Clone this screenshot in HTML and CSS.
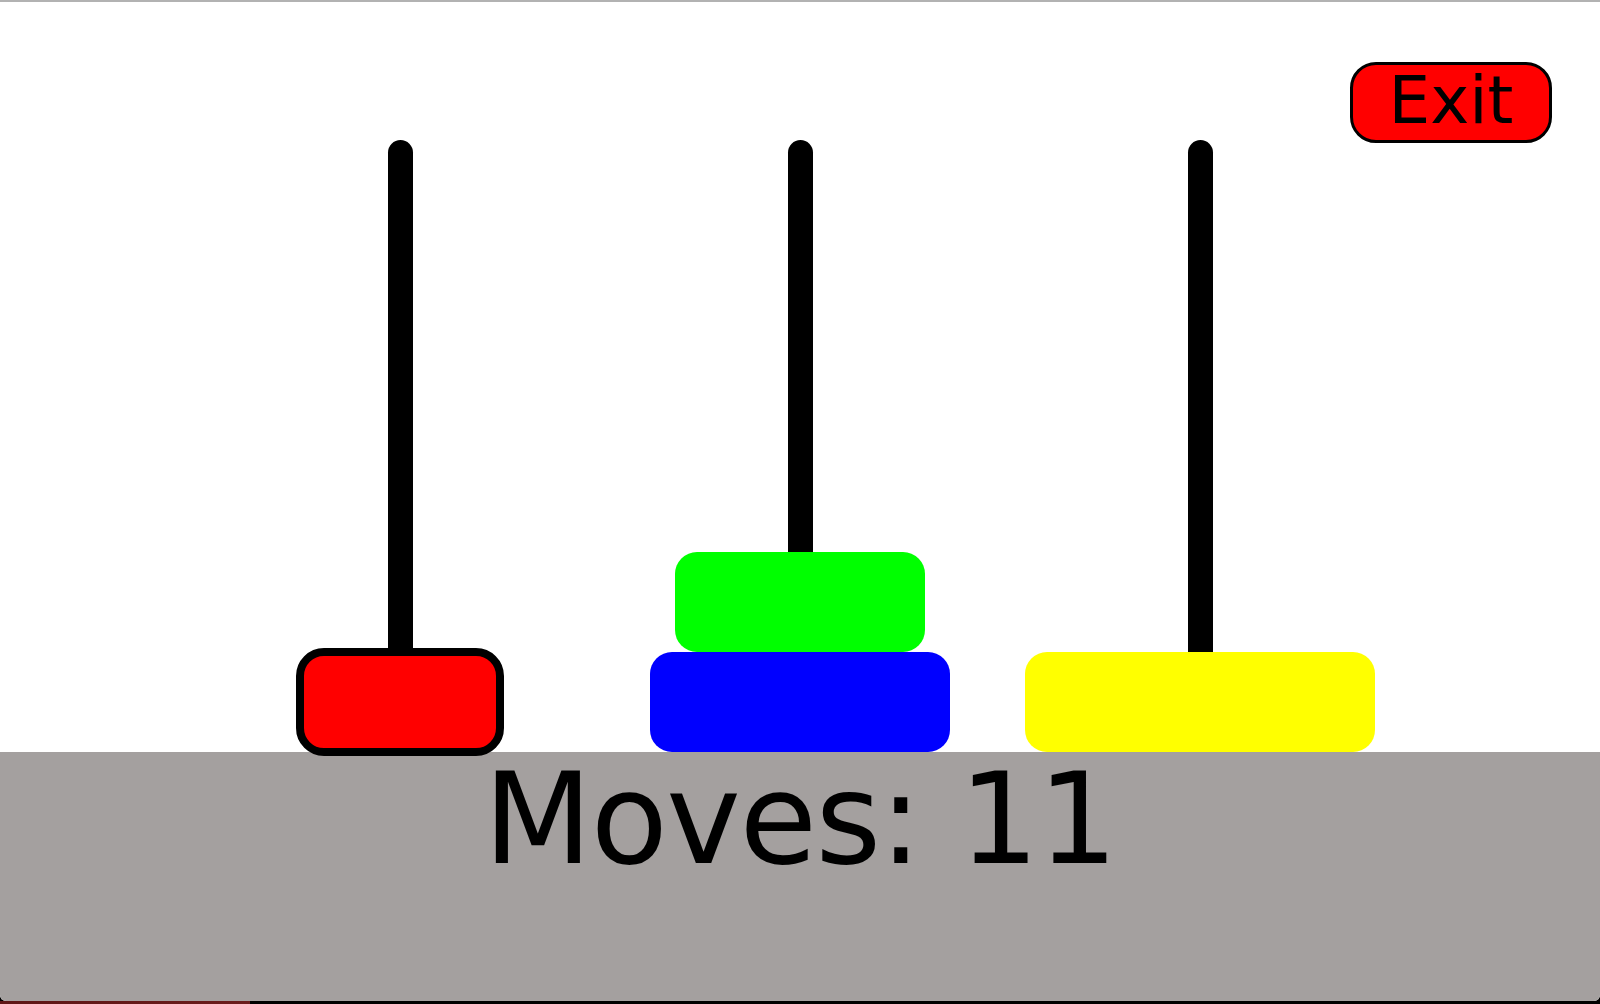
FILE: index.html
```html
<!DOCTYPE html>
<html lang="en">
<head>
  <meta charset="UTF-8">
  <meta name="viewport" content="width=device-width, initial-scale=1.0">
  <title>Towers of Hanoi</title>
  <link rel="stylesheet" href="styles.css">
</head>
<body>
  <div class="window">
    <div class="stage">
      <button class="exit-btn">Exit</button>
      <div class="pegs">
        <div class="peg">
          <div class="rod"></div>
          <div class="disk disk-red selected"></div>
        </div>
        <div class="peg">
          <div class="rod"></div>
          <div class="disk disk-green"></div>
          <div class="disk disk-blue"></div>
        </div>
        <div class="peg">
          <div class="rod"></div>
          <div class="disk disk-yellow"></div>
        </div>
      </div>
    </div>
    <div class="footer">
      <div class="moves">Moves: 11</div>
    </div>
  </div>
  <div class="desktop-strip"></div>
</body>
</html>
```

FILE: styles.css
```css
:root {
  --floor: #a4a09f;
  --rod: #000000;
}
* { box-sizing: border-box; }
html, body {
  margin: 0;
  height: 1004px;
  overflow: hidden;
}
body {
  background: #000;
  font-family: 'DejaVu Sans', sans-serif;
  display: flex;
  flex-direction: column;
}
.window {
  height: 1001px;
  display: flex;
  flex-direction: column;
  background: #fff;
  border-top: 2px solid #b2b2b2;
  border-radius: 0 0 6px 6px;
  overflow: hidden;
}
.stage {
  position: relative;
  height: 750px;
  padding-top: 138px;
  display: flex;
}
.exit-btn {
  position: absolute;
  top: 60px;
  left: 1350px;
  width: 202px;
  height: 81px;
  padding: 0 0 4px;
  background: #ff0000;
  border: 3px solid #000;
  border-radius: 26px;
  font-family: inherit;
  font-size: 66px;
  line-height: 71px;
  color: #000;
}
.pegs {
  flex: 1;
  display: grid;
  grid-template-columns: repeat(3, 400px);
  justify-content: center;
}
.peg {
  display: flex;
  flex-direction: column;
  align-items: center;
}
.rod {
  flex: 1;
  width: 25px;
  background: var(--rod);
  border-radius: 12.5px 12.5px 0 0;
}
.disk {
  height: 100px;
  border-radius: 22px;
  position: relative;
  z-index: 1;
}
.disk-red { width: 200px; background: #ff0000; }
.disk-green { width: 250px; background: #00ff00; }
.disk-blue { width: 300px; background: #0000ff; }
.disk-yellow { width: 350px; background: #ffff00; }
.disk.selected {
  width: 208px;
  height: 108px;
  border: 8px solid #000;
  border-radius: 28px;
  margin-bottom: -4px;
}
.footer {
  flex: 1;
  background: var(--floor);
  padding-top: 5px;
}
.moves {
  text-align: center;
  font-size: 126px;
  line-height: 126px;
  letter-spacing: -1.5px;
  color: #000;
}
.desktop-strip {
  flex: 1;
  background: linear-gradient(to right, #5e1616 0, #6b1c1c 250px, #000 250px);
}
```
